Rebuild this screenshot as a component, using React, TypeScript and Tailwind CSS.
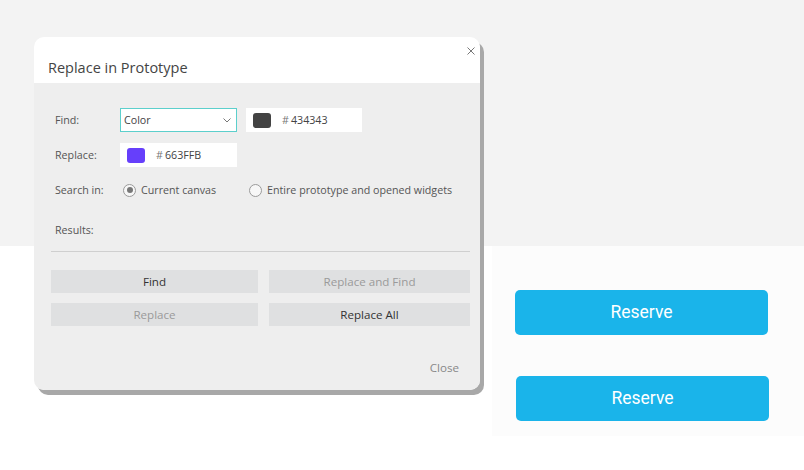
import React from "react";

const dlgFont = { fontFamily: '"Open Sans", "Noto Sans", sans-serif' };

function Radio({ checked }: { checked?: boolean }) {
  return (
    <span className="flex h-[13px] w-[13px] items-center justify-center rounded-full border border-[#9a9a9a] bg-[#f7f7f7]">
      {checked && <span className="h-[6px] w-[6px] rounded-full bg-[#777]" />}
    </span>
  );
}

function ColorField({ color, hex, w }: { color: string; hex: string; w: string }) {
  return (
    <div className={`flex h-[24px] ${w} items-center bg-white pl-[7px]`}>
      <span className="h-[15px] w-[18px] rounded-[3px]" style={{ backgroundColor: color }} />
      <span className="ml-[11px] text-[10.7px] text-[#444]">
        <span className="text-[#777]">#</span>
        <span className="ml-[2px]">{hex}</span>
      </span>
    </div>
  );
}

export default function App() {
  return (
    <div className="relative h-[470px] w-[804px] overflow-hidden bg-white">
      <div className="h-[246px] bg-[#f3f3f3]" />
      <div className="ml-[492px] flex h-[190px] w-[312px] flex-col bg-[#fcfcfc] pl-[23px] pt-[44px]" style={{ fontFamily: 'Roboto, "Noto Sans", sans-serif' }}>
        <button className="h-[45px] w-[253px] rounded-[5px] bg-[#1ab4ea] text-[17.5px] text-white">Reserve</button>
        <button className="ml-[1px] mt-[41px] h-[45px] w-[253px] rounded-[5px] bg-[#1ab4ea] text-[17.5px] text-white">Reserve</button>
      </div>

      <div
        className="absolute left-[34px] top-[37px] w-[446px] overflow-hidden rounded-[10px] shadow-[4px_5px_0_0_#a8a8a8]"
        style={dlgFont}
      >
        <div className="relative h-[46px] bg-white pl-[14px] pt-[21px]">
          <div className="text-[14.5px] leading-[20px] text-[#444]">Replace in Prototype</div>
          <svg className="absolute right-[5px] top-[10px]" width="8" height="8" viewBox="0 0 8 8">
            <path d="M0.5 0.5 L7.5 7.5 M7.5 0.5 L0.5 7.5" stroke="#777" strokeWidth="1" />
          </svg>
        </div>
        <div className="h-[307px] bg-[#eeeeee] pt-[25px] text-[10.7px] text-[#555]">
          <div className="flex items-center pl-[21px]">
            <span className="w-[65px]">Find:</span>
            <div className="flex h-[24px] w-[117px] items-center justify-between border border-[#5ccfcc] bg-white pl-[3px] pr-[5px] text-[#444]">
              <span>Color</span>
              <svg width="8" height="5" viewBox="0 0 8 5">
                <path d="M0.5 0.5 L4 4 L7.5 0.5" stroke="#777" strokeWidth="1" fill="none" />
              </svg>
            </div>
            <div className="ml-[9px]">
              <ColorField color="#434343" hex="434343" w="w-[116px]" />
            </div>
          </div>
          <div className="mt-[11px] flex items-center pl-[21px]">
            <span className="w-[65px]">Replace:</span>
            <ColorField color="#663FFB" hex="663FFB" w="w-[117px]" />
          </div>
          <div className="mt-[11px] flex h-[24px] items-center pl-[21px]">
            <span className="w-[68px]">Search in:</span>
            <Radio checked />
            <span className="ml-[5px] w-[108px]">Current canvas</span>
            <Radio />
            <span className="ml-[5px]">Entire prototype and opened widgets</span>
          </div>
          <div className="mt-[16px] flex h-[24px] items-center pl-[21px]">Results:</div>
          <div className="ml-[17px] mr-[10px] mt-[9px] border-t border-[#cfcfcf]" />
          <div className="ml-[17px] mt-[18px] grid w-[419px] grid-cols-[207px_201px] gap-x-[11px] gap-y-[10px] text-[11.6px]">
            <button className="h-[23px] bg-[#dfe0e1] text-[#333]">Find</button>
            <button className="h-[23px] bg-[#dfe0e1] text-[#9a9a9a]">Replace and Find</button>
            <button className="h-[23px] bg-[#dfe0e1] text-[#9a9a9a]">Replace</button>
            <button className="h-[23px] bg-[#dfe0e1] text-[#333]">Replace All</button>
          </div>
          <div className="mt-[33px] flex justify-end pr-[21px] text-[11.6px] text-[#888]">Close</div>
        </div>
      </div>
    </div>
  );
}
